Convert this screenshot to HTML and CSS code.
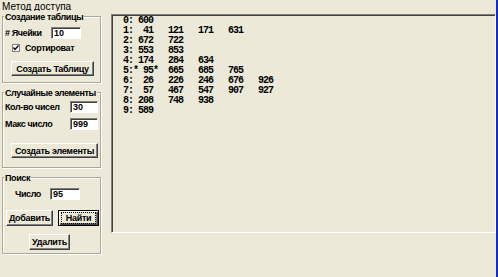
FILE: index.html
```html
<!DOCTYPE html>
<html lang="ru">
<head>
    <meta charset="UTF-8">
    <title>Метод доступа</title>
    <link rel="stylesheet" href="styles.css">
</head>
<body>
    <div class="caption">Метод доступа</div>
    <div class="form">
        <div class="side">
            <div class="group group-table">
                <div class="legend">Создание таблицы</div>
                <div class="row row-cells">
                    <span class="lbl lbl-cells"># Ячейки</span>
                    <div class="edit edit-cells">10</div>
                </div>
                <div class="check-row">
                    <span class="check">
                        <svg width="8" height="8" viewBox="0 0 8 8">
                            <rect x="0.5" y="0.5" width="7" height="7" fill="#fff" stroke="#7f7f7f"/>
                            <path d="M1.5 3.5 L3 5.5 L6.5 1.5" fill="none" stroke="#000" stroke-width="1.3"/>
                        </svg>
                    </span>
                    <span class="lbl">Сортироват</span>
                </div>
                <button class="btn btn-create">Создать Таблицу</button>
            </div>

            <div class="group group-random">
                <div class="legend">Случайные элементы</div>
                <div class="row row-count">
                    <span class="lbl lbl-random">Кол-во чисел</span>
                    <div class="edit edit-random">30</div>
                </div>
                <div class="row row-max">
                    <span class="lbl lbl-random">Макс число</span>
                    <div class="edit edit-random">999</div>
                </div>
                <button class="btn btn-fill">Создать элементы</button>
            </div>

            <div class="group group-search">
                <div class="legend">Поиск</div>
                <div class="row row-number">
                    <span class="lbl lbl-number">Число</span>
                    <div class="edit edit-cells">95</div>
                </div>
                <div class="btn-row">
                    <button class="btn btn-add">Добавить</button>
                    <button class="btn btn-find btn-default"><span class="focus">Найти</span></button>
                </div>
                <button class="btn btn-delete">Удалить</button>
            </div>
        </div>

        <div class="memo">
<pre class="memo-text">0: 600
1:  41   121   171   631
2: 672   722
3: 553   853
4: 174   284   634
5:* 95*  665   685   765
6:  26   226   246   676   926
7:  57   467   547   907   927
8: 208   748   938
9: 589</pre>
        </div>
    </div>
</body>
</html>
```

FILE: styles.css
```css
body {
    margin: 0;
    width: 498px;
    height: 277px;
    box-sizing: border-box;
    background: #ece9d8;
    border-right: 2px solid #0a2ae6;
    font-family: "Liberation Sans", Arial, sans-serif;
    color: #000;
    overflow: hidden;
}
.caption {
    height: 13px;
    line-height: 13px;
    padding-left: 2px;
    font-size: 10px;
}
.form {
    display: flex;
}
.side {
    width: 99px;
    padding-left: 2px;
    margin-right: 10px;
    display: flex;
    flex-direction: column;
}
.group {
    box-sizing: border-box;
    border: 1px solid #aca899;
    box-shadow: inset 1px 1px #fff, 1px 1px #fff;
    padding: 0 0 0 2px;
}
.group-table {
    margin-top: 3px;
    height: 67px;
}
.group-random {
    margin-top: 9px;
    height: 76px;
}
.group-search {
    margin-top: 9px;
    height: 77px;
}
.legend {
    width: fit-content;
    margin: -6px 0 0 -1px;
    padding: 0 1px;
    line-height: 12px;
    background: #ece9d8;
    font-size: 9px;
    font-weight: bold;
    letter-spacing: -0.4px;
    white-space: nowrap;
}
.lbl {
    font-size: 9px;
    font-weight: bold;
    letter-spacing: -0.4px;
    white-space: pre;
}
.row {
    display: flex;
    align-items: center;
    height: 12px;
}
.row-cells { margin-top: 4px; }
.row-count { margin-top: 2px; }
.row-max { margin-top: 5px; }
.row-number { margin-top: 4px; padding-left: 10px; }
.lbl-cells { width: 46px; }
.lbl-random { width: 65px; }
.lbl-number { width: 35px; }
.edit {
    box-sizing: border-box;
    height: 12px;
    background: #fff;
    border: 1px solid;
    border-color: #808080 #fff #fff #808080;
    box-shadow: inset 1px 1px #404040;
    padding-left: 2px;
    font-size: 9px;
    font-weight: bold;
    line-height: 10px;
}
.edit-cells { width: 30px; }
.edit-random { width: 28px; }
.check-row {
    display: flex;
    align-items: center;
    gap: 5px;
    height: 8px;
    margin-top: 5px;
    padding-left: 7px;
}
.check {
    display: flex;
}
.btn {
    box-sizing: border-box;
    display: block;
    height: 15px;
    padding: 0;
    background: #ece9d8;
    border: 1px solid;
    border-color: #fff #404040 #404040 #fff;
    box-shadow: inset -1px -1px #808080;
    font-family: "Liberation Sans", Arial, sans-serif;
    font-size: 9px;
    font-weight: bold;
    letter-spacing: -0.3px;
    color: #000;
    white-space: nowrap;
}
.btn-create {
    margin: 9px 0 0 6px;
    width: 83px;
}
.btn-fill {
    margin: 13px 0 0 6px;
    width: 87px;
}
.btn-row {
    display: flex;
    gap: 5px;
    margin-top: 10px;
    padding-left: 1px;
}
.btn-add {
    width: 47px;
    height: 16px;
}
.btn-find {
    width: 41px;
    height: 16px;
}
.btn-default {
    border-color: #000;
    box-shadow: inset 1px 1px #fff, inset -1px -1px #404040, inset -2px -2px #808080;
}
.focus {
    display: block;
    margin: 0 3px;
    line-height: 10px;
    outline: 1px dotted #000;
    outline-offset: 0;
}
.btn-delete {
    margin: 8px 0 0 24px;
    width: 41px;
    height: 16px;
}
.memo {
    box-sizing: border-box;
    width: 385px;
    height: 219px;
    margin-top: 1px;
    border: 1px solid;
    border-color: #808080 #fff #fff #808080;
    box-shadow: inset 1px 1px #404040;
    padding: 1px 0 0 11px;
}
.memo-text {
    margin: 0;
    font-family: "Liberation Mono", "Courier New", monospace;
    font-size: 10px;
    font-weight: bold;
    line-height: 10px;
    letter-spacing: -1px;
}
```
